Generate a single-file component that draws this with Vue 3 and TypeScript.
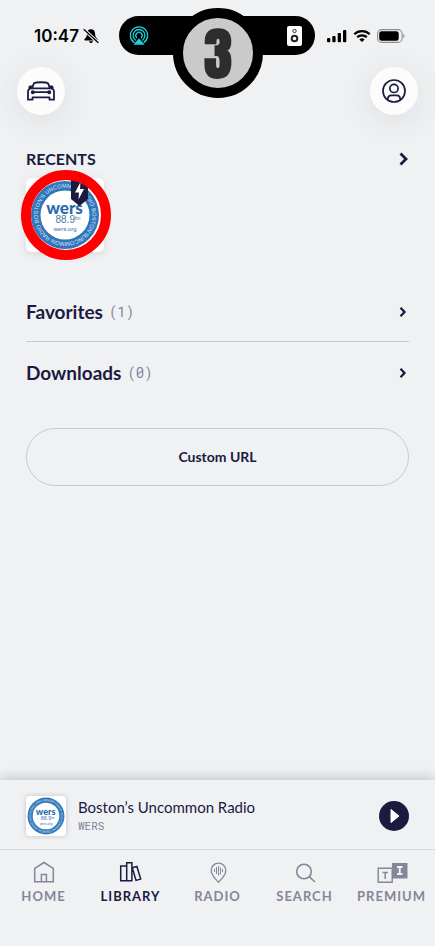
<script setup lang="ts">
interface Tab {
  id: string
  label: string
}

interface LibraryRow {
  label: string
  count: number
}

const tabs: Tab[] = [
  { id: 'home', label: 'HOME' },
  { id: 'library', label: 'LIBRARY' },
  { id: 'radio', label: 'RADIO' },
  { id: 'search', label: 'SEARCH' },
  { id: 'premium', label: 'PREMIUM' },
]
const activeTab = 'library'

const rows: LibraryRow[] = [
  { label: 'Favorites', count: 1 },
  { label: 'Downloads', count: 0 },
]
</script>

<template>
  <div class="screen">
    <svg class="defs" width="0" height="0" aria-hidden="true">
      <symbol id="wers-logo" viewBox="0 0 70 70">
        <circle cx="35" cy="35" r="34" fill="#2f75bb" />
        <circle cx="35" cy="35" r="24.5" fill="#fff" />
        <path id="wers-ring" d="M54.200 54.200A27.200 27.200 0 1 1 54.300 54.100" fill="none" />
        <text class="ring-text" font-size="5.7" fill="#d6e6f5">
          <textPath href="#wers-ring">UNCOMMON RADIO BOSTON'S UNCOMMON RADIO BOSTON'S</textPath>
        </text>
        <text class="brand-text" x="34.500" y="34" font-size="17" font-weight="900" text-anchor="middle" fill="#2a69ad">wers</text>
        <text class="ring-text" x="38" y="43" font-size="10" text-anchor="middle" fill="#4776a8">88.9<tspan font-size="5" dy="-3">fm</tspan></text>
        <text class="ring-text" x="35" y="51" font-size="6" text-anchor="middle" fill="#38659b">wers.org</text>
      </symbol>
    </svg>

    <header class="status">
      <div class="status-side">
        <span class="clock">10:47</span>
        <svg width="16" height="16" viewBox="0 0 16 16" aria-hidden="true">
          <path d="M8 1.200C5 1.200 3.900 3.500 3.900 6c0 3-1.400 3.900-2.400 5.100-.4.600-.1 1.300.6 1.300h11.800c.7 0 1-.7.600-1.300-1-1.200-2.400-2.100-2.400-5.100C12.100 3.500 11 1.200 8 1.200zM6 13.200h4c-.3 1.200-1 1.800-2 1.800s-1.700-.6-2-1.800z" />
          <path d="M1 1.500L15 14.500" stroke="#f0f1f3" stroke-width="3.200" />
          <path d="M1 1.500L15 14.500" stroke="#000" stroke-width="1.200" stroke-linecap="round" />
        </svg>
      </div>
      <div class="island">
        <svg width="20" height="20" viewBox="0 0 20 20" fill="none" stroke="#1fd0dc" stroke-width="1.300" stroke-linecap="round" aria-hidden="true">
          <path d="M5 16.400A8.600 8.600 0 1 1 15 16.400" />
          <path d="M6.300 14A5.900 5.900 0 1 1 13.700 14" />
          <path d="M7.500 11.500A3.200 3.200 0 1 1 12.500 11.500" />
          <path d="M10 12.200L15.600 18.700H4.400Z" fill="#1fd0dc" stroke="none" />
        </svg>
        <svg width="15" height="20" viewBox="0 0 15 20" aria-hidden="true">
          <rect width="15" height="20" rx="2" fill="#fff" />
          <circle cx="7.500" cy="5" r="1.700" fill="none" stroke="#333" stroke-width="1" />
          <circle cx="7.500" cy="12.500" r="2.800" fill="none" stroke="#222" stroke-width="2" />
        </svg>
        <div class="step">3</div>
      </div>
      <div class="status-side right">
        <svg width="20" height="14" viewBox="0 0 20 14" aria-hidden="true">
          <rect x="0" y="9" width="3.300" height="4.300" rx="1" />
          <rect x="5.300" y="7" width="3.300" height="6.300" rx="1" />
          <rect x="10.700" y="4" width="3.300" height="9.300" rx="1" />
          <rect x="16" y="1" width="3.300" height="12.300" rx="1" />
        </svg>
        <svg width="18" height="14" viewBox="0 0 18 14" fill="none" stroke="#000" stroke-width="2.300" aria-hidden="true">
          <path d="M1.300 5.200a11 11 0 0 1 15.400 0" />
          <path d="M4.200 8.200a7 7 0 0 1 9.600 0" />
          <path d="M9 13L6.400 10.500a3.800 3.800 0 0 1 5.200 0z" fill="#000" stroke="none" />
        </svg>
        <svg width="28" height="14" viewBox="0 0 28 14" aria-hidden="true">
          <rect x=".600" y=".600" width="24.500" height="12.800" rx="4" fill="none" stroke="#8d8e90" stroke-width="1.100" />
          <rect x="2.200" y="2.200" width="19.500" height="9.600" rx="2.500" />
          <path d="M26.300 4.800c1.700.7 1.700 3.700 0 4.400z" fill="#8d8e90" />
        </svg>
      </div>
    </header>

    <div class="actions">
      <button class="round" type="button" aria-label="Car mode">
        <svg width="28" height="20" viewBox="0 0 28 20" fill="none" stroke="#1b1b40" stroke-width="1.800" stroke-linejoin="round" aria-hidden="true">
          <path d="M5 7.300L7 2.200C9 .9 19 .9 21 2.200L23 7.300M4.500 7.300h19c2.200 0 3.500 1.600 3.500 3.700v7.700h-4.500v-2.300h-17v2.300H1V11c0-2.100 1.300-3.700 3.500-3.700zM5.200 5.500H2.700l-.5 1.300 2 .8M22.800 5.500h2.500l.5 1.300-2 .8M5.800 11.200h16.400" />
          <circle cx="5.800" cy="11.200" r="1.100" fill="#1b1b40" />
          <circle cx="22.200" cy="11.200" r="1.100" fill="#1b1b40" />
        </svg>
      </button>
      <button class="round" type="button" aria-label="Profile">
        <svg width="24" height="24" viewBox="0 0 24 24" fill="none" stroke="#1b1b40" stroke-width="1.700" aria-hidden="true">
          <circle cx="12" cy="12" r="11" />
          <circle cx="12" cy="9.400" r="4.100" />
          <path d="M5.800 21v-.800c0-2.400 1.300-3.800 3.700-3.800h5c2.400 0 3.700 1.400 3.700 3.800v.800" />
        </svg>
      </button>
    </div>

    <main class="content">
      <a class="recents" href="#recents">
        <h2>RECENTS</h2>
        <svg width="10" height="14" viewBox="0 0 10 14" fill="none" stroke="#1b1b40" stroke-width="2.800" aria-hidden="true">
          <path d="M1.500 1.500L7 7L1.500 12.500" />
        </svg>
      </a>
      <button class="recent-card" type="button" aria-label="WERS 88.9">
        <svg class="logo" viewBox="0 0 70 70" aria-hidden="true"><use href="#wers-logo" /></svg>
        <svg class="ribbon" width="17" height="28" viewBox="0 0 17 28" aria-hidden="true">
          <path d="M0 0h17v20l-8.500 7L0 20z" fill="#1b1b40" />
          <path d="M9.500 3L4 13.500h4L7.500 20.500L13 10H9z" fill="#fff" />
        </svg>
        <span class="spotlight"></span>
      </button>

      <nav class="rows" aria-label="Library">
        <a v-for="row in rows" :key="row.label" class="row" :href="'#' + row.label">
          <span class="row-label">{{ row.label }}</span>
          <span class="row-count">({{ row.count }})</span>
          <svg width="8" height="12" viewBox="0 0 8 12" fill="none" stroke="#1b1b40" stroke-width="2.300" aria-hidden="true">
            <path d="M1.500 1.800L5.500 6L1.500 10.200" />
          </svg>
        </a>
      </nav>

      <button class="custom" type="button">Custom URL</button>
    </main>

    <section class="player">
      <div class="thumb">
        <svg width="38" height="38" viewBox="0 0 70 70" aria-hidden="true"><use href="#wers-logo" /></svg>
      </div>
      <div class="track">
        <div class="title">Boston’s Uncommon Radio</div>
        <div class="station">WERS</div>
      </div>
      <button class="play" type="button" aria-label="Play">
        <svg width="30" height="30" viewBox="0 0 30 30" aria-hidden="true">
          <path d="M12 8.500L20 15L12 21.500z" fill="#fff" stroke="#fff" stroke-width="1" stroke-linejoin="round" />
        </svg>
      </button>
    </section>

    <nav class="tabs" aria-label="Main">
      <a v-for="tab in tabs" :key="tab.id" class="tab" :class="{ active: tab.id === activeTab }" :href="'#' + tab.id">
        <svg v-if="tab.id === 'home'" width="32" height="24" viewBox="1 0 32 24" fill="none" stroke="currentColor" stroke-width="1.500" aria-hidden="true">
          <path d="M7.700 21.800V8.300L17 2.500l9.300 5.800v13.500zM14.400 21.800v-7.300h5v7.300" />
        </svg>
        <svg v-else-if="tab.id === 'library'" width="32" height="24" viewBox="1 0 32 24" fill="none" stroke="currentColor" stroke-width="1.500" aria-hidden="true">
          <path d="M6.700 6h6v14.700h-6zM12.700 2.700h5.200v18h-5.200zM18.300 7.700l4.600-1.200 3.800 12.600-4.700 1.300z" />
        </svg>
        <svg v-else-if="tab.id === 'radio'" width="32" height="24" viewBox="1 0 32 24" fill="none" stroke="currentColor" stroke-width="1.300" aria-hidden="true">
          <path d="M17.500 22.300C14.500 19 10.200 15.200 10.200 10.400a7.300 7.300 0 0 1 14.600 0C24.800 15.200 20.500 19 17.500 22.300z" />
          <path d="M13.500 9v3M15.500 7v7M17.500 6v9.500M19.500 7.500v7M21.500 9v3" stroke-width="1" />
        </svg>
        <svg v-else-if="tab.id === 'search'" width="32" height="24" viewBox="1 0 32 24" fill="none" stroke="currentColor" stroke-width="1.600" aria-hidden="true">
          <circle cx="16" cy="11.500" r="7.300" />
          <path d="M21.200 16.700L27 22" />
        </svg>
        <svg v-else width="32" height="24" viewBox="0 0 32 24" aria-hidden="true">
          <path d="M2.200 8.200h14v14h-14z" fill="none" stroke="currentColor" stroke-width="1.400" />
          <path d="M16 3h15.500v15.500H16z" fill="currentColor" />
          <path d="M6.500 12.500h5.400M9.200 12.500v6.500" fill="none" stroke="currentColor" stroke-width="1.500" />
          <path d="M21 7h5.500M21 14h5.500M23.750 7v7" fill="none" stroke="#f0f1f3" stroke-width="1.900" />
        </svg>
        <span>{{ tab.label }}</span>
      </a>
    </nav>
  </div>
</template>

<style>
body {
  margin: 0;
  background: #f0f1f3;
}
</style>

<style scoped>
.screen {
  display: flex;
  flex-direction: column;
  min-height: 100vh;
  background: #f0f1f3;
  color: #1b1b40;
  font-family: Lato, "Open Sans", sans-serif;
}
.defs {
  position: absolute;
}
a {
  color: inherit;
  text-decoration: none;
}
button {
  padding: 0;
  border: 0;
  color: inherit;
  font-family: inherit;
  cursor: pointer;
}
svg {
  display: block;
  flex: none;
}
.ring-text {
  font-family: "Liberation Sans", sans-serif;
}
.brand-text {
  font-family: Lato, sans-serif;
}
.status {
  display: grid;
  grid-template-columns: 1fr 196px 1fr;
  padding: 16px 1px 0 0;
}
.status-side {
  display: flex;
  align-items: center;
  justify-content: flex-end;
  gap: 4px;
  padding-right: 20px;
}
.clock {
  color: #000;
  font: 600 17px/20px Inter, sans-serif;
}
.right {
  justify-content: flex-start;
  gap: 6px;
  padding: 0 0 0 12px;
}
.island {
  position: relative;
  display: flex;
  align-items: center;
  justify-content: space-between;
  box-sizing: border-box;
  height: 39px;
  padding: 0 13px 0 10px;
  border-radius: 20px;
  background: #000;
}
.step {
  position: absolute;
  top: -8px;
  left: 54px;
  box-sizing: border-box;
  width: 90px;
  height: 90px;
  border: 10px solid #000;
  border-radius: 50%;
  background: #cacaca;
  color: #2d2d2d;
  font: 700 56px/72px Impact, Anton, "Roboto Condensed", "Noto Sans CJK JP", sans-serif;
  text-align: center;
}
.actions {
  display: flex;
  justify-content: space-between;
  padding: 12px 17px 0;
}
.round {
  display: grid;
  place-items: center;
  width: 48px;
  height: 48px;
  border-radius: 50%;
  background: #fcfcfc;
  box-shadow: 0 6px 32px rgba(60, 55, 45, 0.1);
}
.content {
  flex: 1;
  padding: 34px 26px 0;
}
.recents {
  display: flex;
  align-items: center;
  justify-content: space-between;
  height: 20px;
}
h2 {
  margin: 0;
  font-size: 16px;
  font-weight: 700;
  line-height: 20px;
}
.recent-card {
  position: relative;
  display: grid;
  place-items: center;
  width: 78px;
  height: 74px;
  margin: 9px 0 29px;
  border-radius: 6px;
  background: #fff;
  box-shadow: 0 2px 10px rgba(0, 0, 0, 0.1);
}
.logo {
  width: 70px;
  height: 70px;
}
.ribbon {
  position: absolute;
  top: 1px;
  left: 45px;
}
.spotlight {
  position: absolute;
  top: -8px;
  left: -5px;
  box-sizing: border-box;
  width: 90px;
  height: 90px;
  border: 10px solid #f00;
  border-radius: 50%;
}
.row {
  display: flex;
  align-items: center;
  gap: 6px;
  box-sizing: border-box;
  height: 60px;
  padding-top: 2px;
}
.row + .row {
  border-top: 1px solid #c9cacd;
}
.row-label {
  font-size: 19px;
  font-weight: 700;
  line-height: 24px;
}
.row-count {
  flex: 1;
  color: #85869a;
  font: 14px/20px "Roboto Mono", "Liberation Mono", monospace;
}
.row svg {
  margin-right: 2px;
}
.custom {
  display: block;
  width: 100%;
  height: 58px;
  margin-top: 27px;
  padding-bottom: 2px;
  border: 1px solid #c9cacd;
  border-radius: 29px;
  background: transparent;
  font-size: 14px;
  font-weight: 700;
}
.player {
  display: flex;
  align-items: center;
  gap: 12px;
  box-sizing: border-box;
  height: 70px;
  padding: 2px 26px 0;
  border-bottom: 1px solid #d9dadd;
  background: #f0f1f3;
  box-shadow: 0 -2px 12px rgba(0, 0, 0, 0.2);
}
.thumb {
  display: grid;
  place-items: center;
  width: 40px;
  height: 40px;
  border-radius: 4px;
  background: #fff;
  box-shadow: 0 0 5px rgba(0, 0, 0, 0.2);
}
.track {
  flex: 1;
}
.title {
  font-size: 15px;
  line-height: 20px;
}
.station {
  color: #85869a;
  font: 11px/18px "Roboto Mono", "Liberation Mono", monospace;
}
.play {
  width: 30px;
  height: 30px;
  border-radius: 50%;
  background: #1b1b40;
}
.tabs {
  position: relative;
  display: grid;
  grid-template-columns: repeat(5, 1fr);
  height: 96px;
  background: #f0f1f3;
}
.tab {
  display: flex;
  flex-direction: column;
  align-items: center;
  gap: 2px;
  padding-top: 10px;
  color: #85869a;
  font-size: 13px;
  font-weight: 700;
  line-height: 20px;
  letter-spacing: 1px;
}
.tab.active {
  color: #1b1b40;
}
</style>
